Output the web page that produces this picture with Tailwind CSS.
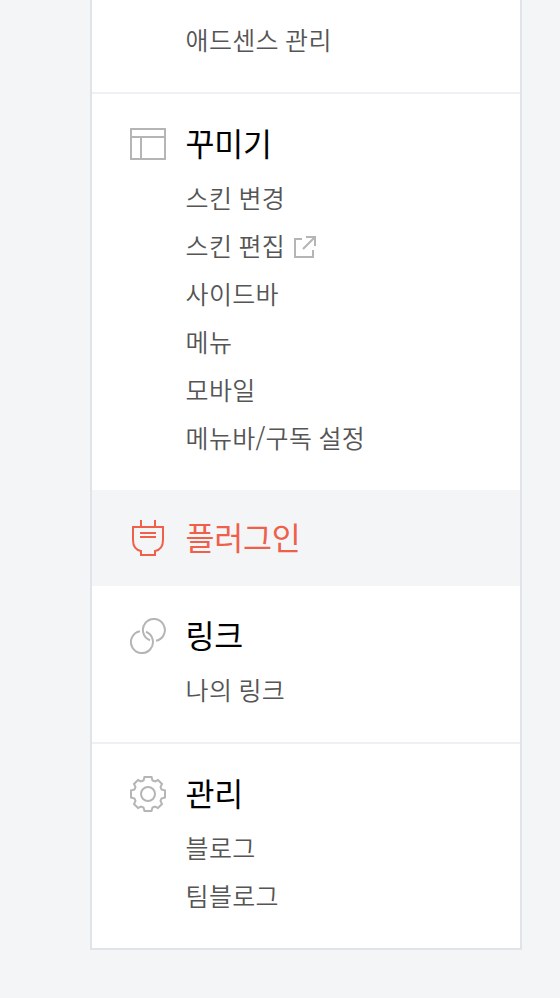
<!DOCTYPE html>
<html lang="ko">
<head>
  <meta charset="UTF-8" />
  <meta name="viewport" content="width=device-width, initial-scale=1.0"/>
  <title>블로그 관리</title>
  <script src="https://cdn.jsdelivr.net/npm/@tailwindcss/browser@4"></script>
</head>
<body class="bg-[#f3f5f7] h-[998px] overflow-hidden font-['Noto_Sans_CJK_KR',sans-serif]">

  <!-- Sidebar -->
  <nav class="ml-[90px] w-[432px] h-[950px] bg-white border-2 border-t-0 border-[#dfe3ea] text-[25px] tracking-[0.3px] [word-spacing:-1px] font-[350] text-[#555]">

    <!-- Revenue -->
    <section class="h-[94px] pl-[93.6px] pt-[15px] border-b-2 border-[#eff0f5]">
      <a href="#" class="block h-12 leading-[48px]">애드센스 관리</a>
    </section>

    <!-- Skin -->
    <section class="h-[396px] pt-[26px]">
      <h2 class="flex items-center h-12 pl-[38px] mb-[5px] text-[31.5px] leading-[44px] tracking-[-0.2px] font-normal text-black">
        <svg class="w-9 h-9 mr-[19.4px] shrink-0" viewBox="0 0 36 36" fill="none" stroke="#b5b5b5" stroke-width="2">
          <path d="M1 3h34v30H1zM1 11h34M11 11v22" />
        </svg>
        <span class="-mt-1">꾸미기</span>
      </h2>
      <ul class="pl-[93.6px] leading-[48px]">
        <li class="h-12"><a href="#">스킨 변경</a></li>
        <li class="h-12">
          <a href="#" class="flex items-center">스킨 편집
            <svg class="w-6 h-6 ml-[7px] mt-0.5" viewBox="0 0 24 24" fill="none" stroke="#b5b5b5" stroke-width="2">
              <path d="M10 5H3v18h18v-7M14 3h9v9M23 3L11 15" />
            </svg>
          </a>
        </li>
        <li class="h-12"><a href="#">사이드바</a></li>
        <li class="h-12"><a href="#">메뉴</a></li>
        <li class="h-12"><a href="#">모바일</a></li>
        <li class="h-12"><a href="#">메뉴바/구독 설정</a></li>
      </ul>
    </section>

    <!-- Plugin (active) -->
    <section class="h-24 pt-6 bg-[#f3f5f7]">
      <h2 class="flex items-center h-12 pl-[38px] text-[31.5px] leading-[44px] tracking-[-0.2px] font-normal text-[#ef5f4a]">
        <svg class="w-9 h-9 mr-[19.4px] shrink-0" viewBox="0 0 36 36" fill="none" stroke="#ef5f4a" stroke-width="2">
          <path d="M11 0v7M25 0v7M3 7h30v13c0 6-3 10-8 11v4H11v-4C6 30 3 26 3 20zM10 13h16M10 17h16" />
        </svg>
        <span class="-mt-1">플러그인</span>
      </h2>
    </section>

    <!-- Link -->
    <section class="h-[158px] pt-[26px] border-b-2 border-[#eff0f5]">
      <h2 class="flex items-center h-12 pl-[38px] mb-[5px] text-[31.5px] leading-[44px] tracking-[-0.2px] font-normal text-black">
        <svg class="w-9 h-9 mr-[19.4px] shrink-0" viewBox="0 0 36 36" fill="none" stroke="#b5b5b5" stroke-width="2">
          <path d="M26 22.8A11 11 0 1 0 20 22.3M10 13.2A11 11 0 1 0 16 13.8" />
        </svg>
        <span class="-mt-1">링크</span>
      </h2>
      <ul class="pl-[93.6px] leading-[48px]">
        <li class="h-12"><a href="#">나의 링크</a></li>
      </ul>
    </section>

    <!-- Settings -->
    <section class="pt-[26px]">
      <h2 class="flex items-center h-12 pl-[38px] mb-[5px] text-[31.5px] leading-[44px] tracking-[-0.2px] font-normal text-black">
        <svg class="w-9 h-9 mr-[19.4px] shrink-0" viewBox="0 0 36 36" fill="none" stroke="#b5b5b5" stroke-width="2">
          <circle cx="18" cy="18" r="7" />
          <path d="M14.500 1L21.500 1L22.500 4.500L25 5.500L28 4L32 8L30.500 11L31.500 13.500L35 14.500L35 21.500L31.500 22.500L30.500 25L32 28L28 32L25 30.500L22.500 31.500L21.500 35L14.500 35L13.500 31.500L11 30.500L8 32L4 28L5.500 25L4.500 22.500L1 21.500L1 14.500L4.500 13.500L5.500 11L4 8L8 4L11 5.500L13.500 4.500Z" />
        </svg>
        <span class="-mt-1">관리</span>
      </h2>
      <ul class="pl-[93.6px] leading-[48px]">
        <li class="h-12"><a href="#">블로그</a></li>
        <li class="h-12"><a href="#">팀블로그</a></li>
      </ul>
    </section>
  </nav>

</body>
</html>
